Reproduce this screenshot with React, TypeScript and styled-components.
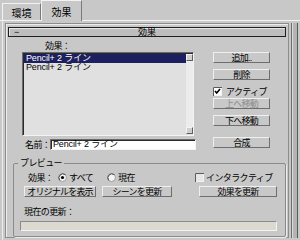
import styled, { createGlobalStyle, css } from "styled-components";

const GlobalStyle = createGlobalStyle`
  html, body {
    margin: 0;
    padding: 0;
    background: #c8c8c8;
  }
  * {
    box-sizing: border-box;
  }
  body {
    font-family: "Liberation Sans", "Noto Sans CJK JP", sans-serif;
    font-size: 9px;
    letter-spacing: -0.6px;
    color: #000;
  }
`;

const Screen = styled.div`
  width: 300px;
  height: 240px;
  overflow: hidden;
  display: flex;
  flex-direction: column;
  background: #c8c8c8;
`;

const TabBar = styled.div`
  display: flex;
  align-items: flex-end;
  height: 21px;
  padding-left: 2px;
  border-bottom: 1px solid #f2f2f2;
`;

const Tab = styled.div<{ $active?: boolean }>`
  display: flex;
  align-items: center;
  justify-content: center;
  width: ${({ $active }) => ($active ? 41 : 39)}px;
  height: ${({ $active }) => ($active ? 21 : 17)}px;
  margin-bottom: ${({ $active }) => ($active ? -1 : 0)}px;
  border-top: 1px solid #f2f2f2;
  border-left: 1px solid #f2f2f2;
  border-right: 1px solid #7a7a7a;
  background: #c8c8c8;
  padding-top: ${({ $active }) => ($active ? 0 : 1)}px;
  font-size: 10px;
  letter-spacing: 0;
`;

const Workspace = styled.div`
  flex: 1;
  display: flex;
  margin-left: 2px;
  padding: 2px 0 3px 2px;
  border-left: 1px solid #ececec;
`;

const Rollout = styled.div`
  width: 284px;
  display: flex;
  flex-direction: column;
  border: 1px solid #8c8c8c;
  box-shadow: inset 1px 1px 0 #ececec;
`;

const SideStrip = styled.div`
  width: 7px;
  margin-left: 2px;
  border-left: 1px solid #6c6c6c;
  border-right: 1px solid #5a5a5a;
  background: #b4b4b4;
  box-shadow: inset 1px 0 0 #dcdcdc;
`;

const RolloutHeader = styled.div`
  display: flex;
  align-items: center;
  height: 10px;
  margin: 3px 2px 0 2px;
  padding: 0 5px;
  border: 1px solid #1e1e1e;
  box-shadow: inset 1px 1px 0 #e6e6e6;
  background: #bdbdbd;
  line-height: 8px;
`;

const Minus = styled.span`
  width: 12px;
`;

const HeaderTitle = styled.span`
  flex: 1;
  text-align: center;
  padding-right: 12px;
  letter-spacing: 0;
`;

const RolloutBody = styled.div`
  padding: 4px 0 0 7px;
`;

const TopSection = styled.div`
  display: flex;
  padding-left: 9px;
`;

const LeftCol = styled.div`
  width: 174px;
  display: flex;
  flex-direction: column;
`;

const RightCol = styled.div`
  width: 57px;
  margin-left: 17px;
  padding-top: 11px;
  display: flex;
  flex-direction: column;
`;

const FieldLabel = styled.div`
  height: 11px;
  line-height: 10px;
  padding-left: 23px;
`;

const sunken = css`
  border-top: 1px solid #6a6a6a;
  border-left: 1px solid #6a6a6a;
  border-right: 1px solid #f4f4f4;
  border-bottom: 1px solid #f4f4f4;
  box-shadow: inset 1px 1px 0 #2a2a2a;
`;

const ListBox = styled.div`
  width: 172px;
  height: 84px;
  display: flex;
  ${sunken};
  background: #e0e0e0;
  padding: 1px 0 1px 1px;
`;

const ListItems = styled.div`
  flex: 1;
  display: flex;
  flex-direction: column;
`;

const ListItem = styled.div<{ $selected?: boolean }>`
  height: 9px;
  line-height: 9px;
  padding-left: 2px;
  white-space: nowrap;
  letter-spacing: -0.15px;
  background: ${({ $selected }) => ($selected ? "#1d205e" : "transparent")};
  color: ${({ $selected }) => ($selected ? "#fff" : "#000")};
`;

const ScrollTrack = styled.div`
  width: 7px;
  display: flex;
  flex-direction: column;
  justify-content: space-between;
  background: #ececec;
`;

const ScrollArrow = styled.div`
  width: 7px;
  height: 7px;
  background: #cfcfcf;
  border-top: 1px solid #f4f4f4;
  border-left: 1px solid #f4f4f4;
  border-right: 1px solid #606060;
  border-bottom: 1px solid #606060;
`;

const NameRow = styled.div`
  display: flex;
  align-items: center;
  margin-top: 3px;
  height: 11px;
`;

const NameLabel = styled.span`
  width: 28px;
  padding-left: 3px;
  white-space: nowrap;
`;

const NameInput = styled.div`
  width: 146px;
  height: 11px;
  line-height: 9px;
  padding-left: 2px;
  ${sunken};
  background: #fff;
  white-space: nowrap;
  overflow: hidden;
  letter-spacing: -0.15px;
`;

const Button = styled.div<{ $width?: number; $disabled?: boolean; $gap?: number }>`
  display: flex;
  align-items: center;
  justify-content: center;
  width: ${({ $width }) => $width ?? 57}px;
  height: 11px;
  margin-top: ${({ $gap }) => $gap ?? 0}px;
  border-top: 1px solid #efefef;
  border-left: 1px solid #efefef;
  border-right: 1px solid #6e6e6e;
  border-bottom: 1px solid #6e6e6e;
  background: #c8c8c8;
  white-space: nowrap;
  letter-spacing: -0.8px;
  color: ${({ $disabled }) => ($disabled ? "#8c8c8c" : "#000")};
`;

const CheckRow = styled.div<{ $gap?: number }>`
  display: flex;
  align-items: center;
  gap: 4px;
  height: 10px;
  margin-top: ${({ $gap }) => $gap ?? 0}px;
  white-space: nowrap;
`;

const Group = styled.fieldset`
  width: 266px;
  margin: 8px 0 0 0;
  padding: 0 0 5px 0;
  border: 1px solid #8a8a8a;
  border-radius: 2px;
  box-shadow: 1px 1px 0 #ececec;
`;

const Legend = styled.legend`
  margin-left: 4px;
  padding: 0 2px;
  line-height: 11px;
`;

const PreviewRow = styled.div`
  display: flex;
  align-items: center;
  height: 10px;
  margin-top: 3px;
  padding-left: 14px;
  white-space: nowrap;
`;

const RowLabel = styled.span`
  width: 30px;
`;

const RadioOption = styled.span<{ $width: number }>`
  display: flex;
  align-items: center;
  gap: 2px;
  width: ${({ $width }) => $width}px;
`;

const ButtonRow = styled.div`
  display: flex;
  gap: 6px;
  margin-top: 4px;
  padding-left: 10px;
`;

const Spacer = styled.div`
  width: 15px;
`;

const UpdateLabel = styled.div`
  margin-top: 10px;
  padding-left: 10px;
  height: 10px;
  line-height: 10px;
`;

const ProgressBar = styled.div`
  width: 257px;
  height: 10px;
  margin: 4px 0 0 6px;
  ${sunken};
  box-shadow: none;
  border-top-color: #8a8a8a;
  border-left-color: #8a8a8a;
  background: #dcdad0;
`;

const CheckBox = ({ checked }: { checked?: boolean }) => (
  <svg width="9" height="9" viewBox="0 0 9 9">
    <rect x="0" y="0" width="9" height="9" fill={checked ? "#fff" : "#e6e6e6"} />
    <path d="M0.5 9V0.5H9" stroke="#5a5a5a" fill="none" />
    <path d="M8.5 1V9M1 8.5H9" stroke="#f2f2f2" fill="none" />
    {checked && (
      <path d="M2 4L3.7 6L7 2" stroke="#000" strokeWidth="1.6" fill="none" />
    )}
  </svg>
);

const Radio = ({ checked }: { checked?: boolean }) => (
  <svg width="9" height="9" viewBox="0 0 9 9">
    <circle cx="4.5" cy="4.5" r="4" fill="#f4f4f4" stroke="#9a9a9a" />
    <path d="M1.7 7.3A4 4 0 0 1 7.3 1.7" stroke="#4a4a4a" fill="none" />
    {checked && <circle cx="4.5" cy="4.5" r="1.6" fill="#000" />}
  </svg>
);

const App = () => {
  return (
    <>
      <GlobalStyle />
      <Screen>
        <TabBar>
          <Tab>環境</Tab>
          <Tab $active>効果</Tab>
        </TabBar>
        <Workspace>
          <Rollout>
            <RolloutHeader>
              <Minus>−</Minus>
              <HeaderTitle>効果</HeaderTitle>
            </RolloutHeader>
            <RolloutBody>
              <TopSection>
                <LeftCol>
                  <FieldLabel>効果：</FieldLabel>
                  <ListBox>
                    <ListItems>
                      <ListItem $selected>Pencil+ 2 ライン</ListItem>
                      <ListItem>Pencil+ 2 ライン</ListItem>
                    </ListItems>
                    <ScrollTrack>
                      <ScrollArrow />
                      <ScrollArrow />
                    </ScrollTrack>
                  </ListBox>
                  <NameRow>
                    <NameLabel>名前：</NameLabel>
                    <NameInput>Pencil+ 2 ライン</NameInput>
                  </NameRow>
                </LeftCol>
                <RightCol>
                  <Button>追加..</Button>
                  <Button $gap={6}>削除</Button>
                  <CheckRow $gap={6}>
                    <CheckBox checked />
                    アクティブ
                  </CheckRow>
                  <Button $gap={2} $disabled>
                    上へ移動
                  </Button>
                  <Button $gap={6}>下へ移動</Button>
                  <Button $gap={11}>合成</Button>
                </RightCol>
              </TopSection>
              <Group>
                <Legend>プレビュー</Legend>
                <PreviewRow>
                  <RowLabel>効果：</RowLabel>
                  <RadioOption $width={49}>
                    <Radio checked />
                    すべて
                  </RadioOption>
                  <RadioOption $width={88}>
                    <Radio />
                    現在
                  </RadioOption>
                  <RadioOption $width={90}>
                    <CheckBox />
                    インタラクティブ
                  </RadioOption>
                </PreviewRow>
                <ButtonRow>
                  <Button $width={72}>オリジナルを表示</Button>
                  <Button $width={70}>シーンを更新</Button>
                  <Spacer />
                  <Button $width={78}>効果を更新</Button>
                </ButtonRow>
                <UpdateLabel>現在の更新：</UpdateLabel>
                <ProgressBar />
              </Group>
            </RolloutBody>
          </Rollout>
          <SideStrip />
        </Workspace>
      </Screen>
    </>
  );
};

export default App;
